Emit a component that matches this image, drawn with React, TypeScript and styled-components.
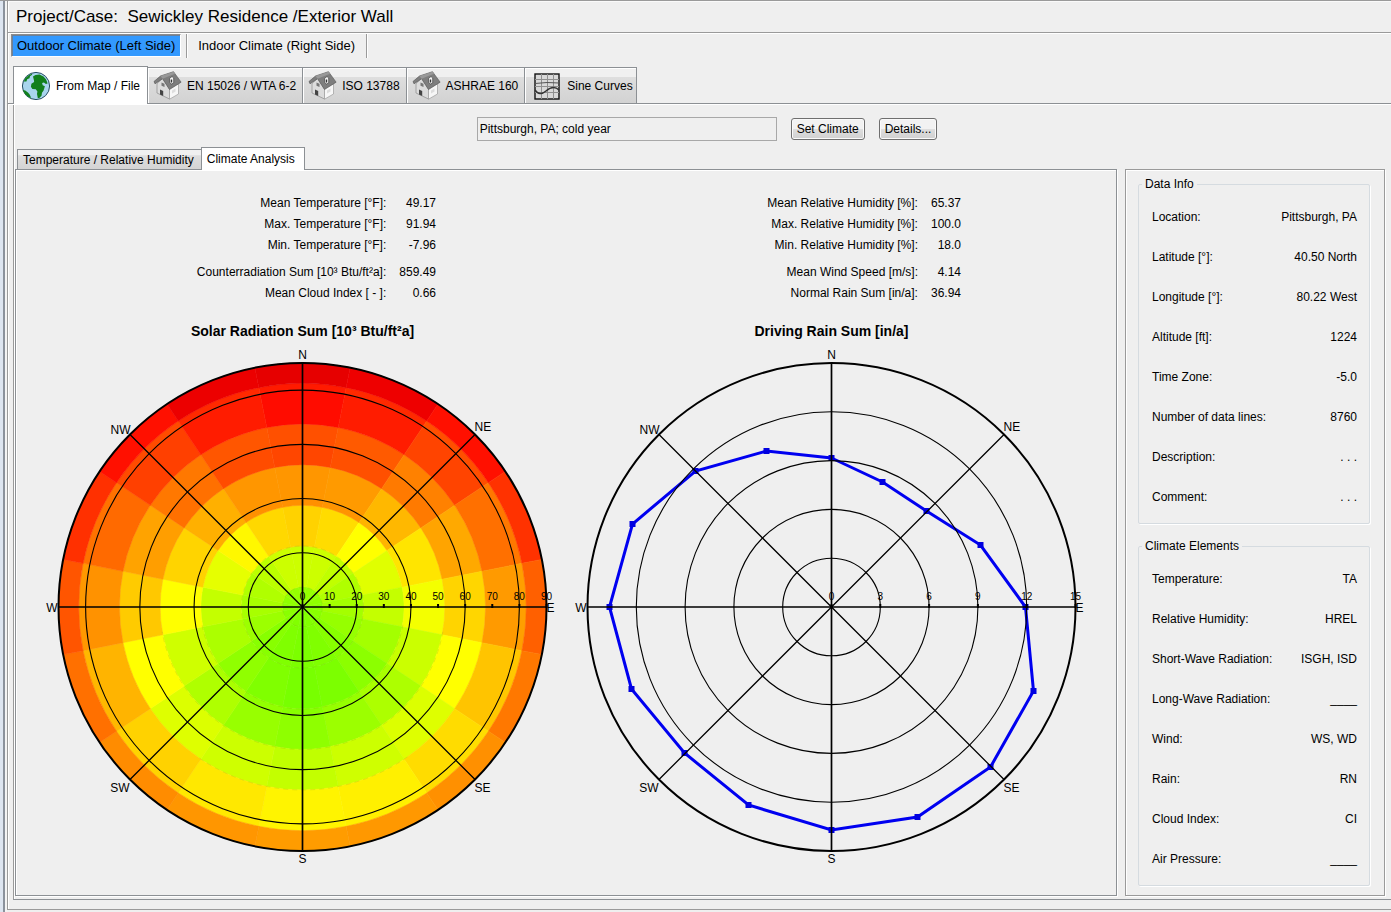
import React from "react";
import styled, { createGlobalStyle, css } from "styled-components";

const GlobalStyle = createGlobalStyle`
  * { box-sizing: border-box; }
  body {
    margin: 0;
    background: #efefef;
    color: #000;
    font-family: "Liberation Sans", Arial, sans-serif;
    font-size: 12px;
    line-height: 16px;
  }
  button, input { font: inherit; color: inherit; }
`;

const Frame = styled.div`
  display: flex;
  min-height: 100vh;
  border-top: 1px solid #9a9a9a;
`;

const Gutter = styled.div`
  flex: none;
  width: 7px;
  background: linear-gradient(to right, #dde5f0 0 3px, #8b929c 3px 5px, #f4f4f4 5px);
`;

const Main = styled.main`
  flex: 1;
  min-width: 0;
  display: flex;
  flex-direction: column;
  margin-bottom: 2px;
  border-left: 1px solid #9a9a9a;
  border-bottom: 1px solid #9a9a9a;
  box-shadow: inset 1px 0 #fff;
`;

const Header = styled.header`
  height: 32px;
  padding: 6px 8px;
  border-bottom: 1px solid #9a9a9a;
  box-shadow: 0 1px #fff, inset 0 1px #fafafa;
`;

const Title = styled.h1`
  margin: 0;
  font-size: 17px;
  line-height: 20px;
  font-weight: 400;
  white-space: pre;
`;

const SideNav = styled.nav`
  display: flex;
  padding: 1px 3px 0;
  height: 27px;
`;

const SideButton = styled.button<{ $active?: boolean }>`
  height: 23px;
  padding: 0 5px;
  font-size: 13px;
  line-height: 20px;
  background: none;
  border: 1px solid transparent;
  white-space: nowrap;
  ${(p) =>
    p.$active &&
    css`
      background: #3399fe;
      border-color: #8c8c8c #fff #fff #8c8c8c;
      box-shadow: inset 1px 1px #6a7f99;
    `}
`;

const NavDivider = styled.span`
  width: 1px;
  height: 24px;
  margin: 0 5px;
  background: #9a9a9a;
  box-shadow: 1px 0 #fff;
`;

const TabBar = styled.div`
  display: flex;
  align-items: flex-end;
  height: 44px;
  padding-left: 5px;
  border-bottom: 1px solid #8c9094;
  box-shadow: 0 1px #fff;
`;

const Tab = styled.button<{ $active?: boolean }>`
  display: flex;
  align-items: center;
  gap: 5px;
  height: 36px;
  padding: 0 6px 0 5px;
  white-space: nowrap;
  border: 1px solid #8c9094;
  border-width: 1px 1px 0 0;
  box-shadow: inset 1px 1px #fff;
  background: linear-gradient(#f0f0f0 0 25%, #dedede 26%, #d2d2d2);
  &:last-child { padding-right: 3px; }
  ${(p) =>
    p.$active &&
    css`
      height: 38px;
      margin-bottom: -1px;
      padding: 0 7px;
      border-left-width: 1px;
      background: #fff;
    `}
`;

const Content = styled.div`
  flex: 1;
  display: flex;
  flex-direction: column;
  margin: 1px 0 9px 5px;
  padding: 12px 6px 3px 1px;
  border-left: 1px solid #9a9a9a;
  border-bottom: 1px solid #8c9094;
  box-shadow: inset 1px 0 #fff;
`;

const ClimateBar = styled.div`
  display: flex;
  justify-content: center;
  align-items: center;
  gap: 14px;
  padding-left: 14px;
`;

const ClimateField = styled.input`
  width: 300px;
  height: 24px;
  padding: 0 2px;
  border: 1px solid #a8a8a8;
  background: #efefef;
`;

const PushButton = styled.button`
  height: 22px;
  padding: 0 5px;
  border: 1px solid #6f6f6f;
  border-radius: 3px;
  box-shadow: inset 0 0 0 1px #fafafa;
  background: linear-gradient(#f2f2f2 0 48%, #dedede 52%, #d0d0d0);
`;

const SubTabBar = styled.div`
  display: flex;
  align-items: flex-end;
  height: 28px;
  padding-left: 2px;
`;

const SubTab = styled.button<{ $active?: boolean }>`
  height: 20px;
  padding: 0 7px 0 5px;
  line-height: 18px;
  white-space: nowrap;
  border: 1px solid #8c9094;
  border-width: 1px 0 0 1px;
  background: linear-gradient(#f0f0f0 0 25%, #dedede 30%, #d4d4d4);
  ${(p) =>
    p.$active &&
    css`
      position: relative;
      height: 23px;
      margin-bottom: -1px;
      padding: 0 9px 0 5px;
      line-height: 22px;
      border-right-width: 1px;
      background: #fff;
    `}
`;

const Columns = styled.div`
  flex: 1;
  display: flex;
  gap: 8px;
`;

const Analysis = styled.section`
  flex: 1;
  min-width: 0;
  display: grid;
  grid-template-columns: 1fr 1fr;
  align-content: start;
  padding: 23px 20px 16px 22px;
  border: 1px solid #8c9094;
  box-shadow: inset 1px 1px #fff, 1px 1px #fff;
`;

const Chart = styled.article`
  display: flex;
  flex-direction: column;
`;

const Stats = styled.dl<{ $inset: number }>`
  display: grid;
  grid-template-columns: max-content max-content;
  justify-content: end;
  column-gap: 13px;
  margin: 0;
  padding-right: ${(p) => p.$inset}px;
  line-height: 21px;
  text-align: right;
`;

const StatLabel = styled.dt<{ $spaced?: boolean }>`
  padding-top: ${(p) => (p.$spaced ? 6 : 0)}px;
`;

const StatValue = styled.dd<{ $spaced?: boolean }>`
  margin: 0;
  padding-top: ${(p) => (p.$spaced ? 6 : 0)}px;
`;

const ChartTitle = styled.h2`
  margin: 17px 0 3px;
  font-size: 14px;
  line-height: 20px;
  text-align: center;
`;

const ChartSvg = styled.svg`
  display: block;
  width: 100%;
  height: 528px;
  font-family: inherit;
`;

const Sidebar = styled.aside`
  flex: none;
  width: 260px;
  padding: 6px 14px 6px 12px;
  border: 1px solid #9a9a9a;
  box-shadow: inset 1px 1px #fff, 1px 1px #fff;
`;

const Group = styled.fieldset`
  margin: 0;
  padding: 5px 12px 6px 13px;
  min-width: 0;
  border: 1px solid #d5dbe0;
  border-radius: 2px;
  box-shadow: 1px 1px #fff;
  & + & { margin-top: 14px; }
`;

const Legend = styled.legend`
  margin-left: -10px;
  padding: 0 3px;
`;

const Facts = styled.dl`
  margin: 0;
`;

const Fact = styled.div`
  display: flex;
  justify-content: space-between;
  line-height: 40px;
`;

const FactValue = styled.dd`
  margin: 0;
`;

const GlobeIcon = () => (
  <svg width="30" height="30" viewBox="0 0 30 30" aria-hidden="true">
    <circle cx="15" cy="15" r="13.6" fill="#a9d5ee" stroke="#274e63" strokeWidth="1" />
    <path d="M12 5.500 14.500 4l4-.6 4 2.200 2.600 3 1.500 4-1.700.4-2-1.500-1.800.4.6 2.400 2.200 1-1.300 4.100-1.600 2.300-.5 3-2.200 2.200-1.500.2-.8-4.200.4-2.500-1.600-2.200-3.400-.3-1.500-2.200.5-3 2.700-1.600-.1-1.600z" fill="#12801c" />
    <path d="M2.700 10.500 4.500 7 7.500 4.500l3-1.700.9.800-2.400 1.600-.5 2-2.300 1-.8 2.200zM1.900 19l2.400.5 2.900 2.300 1.600 2 1.400 3.200-3.200-1.200-3.200-3z" fill="#12801c" />
  </svg>
);

const HouseIcon = () => (
  <svg width="29" height="29" viewBox="0 0 29 29" aria-hidden="true">
    <path d="M4 12.500 10 7l6.500 11V28L4 22z" fill="#dcdcdc" stroke="#8b8b8b" strokeWidth=".7" />
    <path d="m16.500 17.500 9-5V23l-9 5.200z" fill="#f7f7f7" stroke="#9c9c9c" strokeWidth=".7" />
    <path d="M1 10.500 7.500 5 20.500.700l7.600 10.500L16.500 18.500 9.500 7.700 2 12.800z" fill="#7e7e7e" stroke="#5c5c5c" strokeWidth=".7" />
    <path d="M7.500 5 20.500.700l1.500 2L9.500 7.700z" fill="#999" />
    <path d="M16.500 7.500 19 5.500l1.700 1.500v5L18.500 13l-2-1.500z" fill="#f5f5f5" stroke="#444" strokeWidth=".7" />
    <path d="M17.700 8.500h1.500v3h-1.500z" fill="#333" />
    <path d="m7 18.500 3.200 1.500v5L7 23.500z" fill="#444" />
    <path d="m8.500 11.500 3 1.200v3.300l-3-1.300z" fill="#777" />
    <path d="m19 19.500 3.500-2v3l-3.500 2z" fill="#ddd" />
  </svg>
);

const SineIcon = () => (
  <svg width="32" height="28" viewBox="-3 0 32 28" aria-hidden="true">
    <rect x="2" y="2" width="24" height="25" fill="#d9d9d9" stroke="#111" strokeWidth="1.400" />
    <path d="M8.500 2v25M14.500 2v25M20.500 2v25M2 7.500h24M2 14.500h24M2 20.500h24" stroke="#909090" fill="none" />
    <path d="M2 11.500 14 10.500l12 .5" stroke="#555" fill="none" />
    <path d="M2 18c3 4.500 7 4.500 11 1s9-5 13-1" stroke="#333" strokeWidth="1.400" fill="none" />
  </svg>
);

const RADIUS = 244;
const SECTORS = 16;
const BAND_LIMITS = [0, 7.5, 22.5, 37.5, 52.5, 67.5, 82.5, 90];

// One row per tilt band, inner to outer; columns run clockwise from north.
const BAND_COLORS = [
  "96ff00 96ff00 94ff00 90ff00 8eff00 8aff00 86ff00 82ff00 80ff00 82ff00 86ff00 8aff00 8eff00 90ff00 94ff00 96ff00",
  "ccff00 ccff00 c0ff00 b0ff00 a4ff00 96ff00 88ff00 80ff00 7cff00 80ff00 88ff00 9cff00 a8ff00 b0ff00 bcff00 ccff00",
  "ffd200 ffdc00 ffff00 e0ff00 c4ff00 a4ff00 8cff00 7cff00 78ff00 80ff00 90ff00 acff00 c4ff00 e6ff00 fff800 ffd800",
  "ff9000 ff9400 ffb400 ffe400 f4ff00 c8ff00 a8ff00 96ff00 88ff00 92ff00 aaff00 ccff00 ffff00 ffd200 ffac00 ff9000",
  "ff4600 ff5000 ff7a00 ffa400 ffd400 ffff00 dcff00 ccff00 c0ff00 ccff00 dcff00 ffff00 ffc800 ff9e00 ff7000 ff4c00",
  "ff0c00 ff1c00 ff4400 ff7000 ff9a00 ffc400 ffdc00 fff000 fff400 ffe800 ffd200 ffb400 ff9200 ff6a00 ff4000 ff1c00",
  "e60000 ee0000 ff1000 ff3200 ff6000 ff7800 ff9000 ff9800 ff9c00 ff9600 ff8c00 ff7000 ff5500 ff3000 ff1000 ec0000",
].map((row) => row.split(" "));

const polar = (radius: number, degrees: number) => {
  const a = (degrees * Math.PI) / 180;
  return `${(radius * Math.sin(a)).toFixed(2)} ${(-radius * Math.cos(a)).toFixed(2)}`;
};

const cell = (band: number, sector: number) => {
  const r0 = (BAND_LIMITS[band] / 90) * RADIUS;
  const r1 = (BAND_LIMITS[band + 1] / 90) * RADIUS;
  const from = (sector - 0.5) * (360 / SECTORS);
  const to = from + 360 / SECTORS;
  return `M${polar(r0, from)}L${polar(r1, from)}A${r1} ${r1} 0 0 1 ${polar(r1, to)}L${polar(r0, to)}A${r0} ${r0} 0 0 0 ${polar(r0, from)}Z`;
};

const POINTS: [string, number, number, "start" | "middle" | "end"][] = [
  ["N", 0, -248, "middle"],
  ["NE", 172, -176, "start"],
  ["E", 244, 5, "start"],
  ["SE", 172, 185, "start"],
  ["S", 0, 256, "middle"],
  ["SW", -173, 185, "end"],
  ["W", -245, 5, "end"],
  ["NW", -172, -173, "end"],
];

const CompassGrid = ({ rings, ticks }: { rings: number[]; ticks: number[] }) => {
  const max = ticks[ticks.length - 1];
  const d = RADIUS * Math.SQRT1_2;
  return (
    <>
      <g fill="none" stroke="#000">
        {rings.map((r) => (
          <circle key={r} r={(r / max) * RADIUS} strokeWidth="1.100" />
        ))}
        <circle r={RADIUS} strokeWidth="2" />
        <path d={`M${-d} ${-d}L${d} ${d}M${-d} ${d}L${d} ${-d}`} strokeWidth="1.300" />
        <path d={`M0 ${-RADIUS}V${RADIUS}M${-RADIUS} 0H${RADIUS}`} strokeWidth="1.700" />
      </g>
      {ticks.map((t) => (
        <g key={t}>
          <rect x={(t / max) * RADIUS - 1} y="-3" width="2" height="4" />
          <text x={(t / max) * RADIUS} y="-7" fontSize="10" textAnchor="middle">
            {t}
          </text>
        </g>
      ))}
      {POINTS.map(([name, x, y, anchor]) => (
        <text key={name} x={x} y={y} fontSize="12" textAnchor={anchor}>
          {name}
        </text>
      ))}
    </>
  );
};

const SolarChart = () => (
  <ChartSvg viewBox="-264 -263 528 528" role="img" aria-label="Solar radiation by orientation and tilt">
    {BAND_COLORS.map((row, band) =>
      row.map((color, sector) => (
        <path
          key={`${band}-${sector}`}
          d={cell(band, sector)}
          fill={`#${color}`}
          stroke={`#${color}`}
          strokeWidth=".5"
        />
      ))
    )}
    <g fill="none" stroke="#ffff00" strokeOpacity=".06">
      <circle r="220" strokeWidth="7" />
      <circle r="173" strokeWidth="20" />
      <circle r="125" strokeWidth="34" />
    </g>
    <g fill="none" stroke="#70a000" strokeOpacity=".3" strokeWidth=".6" strokeDasharray="5 4">
      <circle r="20" />
      <circle r="61" />
      <path d={`M${polar(102, 100)}A102 102 0 0 1 ${polar(102, 260)}`} />
      <path d={`M${polar(142.5, 100)}A142.5 142.5 0 0 1 ${polar(142.5, 260)}`} />
      <path d={`M${polar(183, 145)}A183 183 0 0 1 ${polar(183, 215)}`} />
    </g>
    <CompassGrid rings={[20, 40, 60, 80]} ticks={[0, 10, 20, 30, 40, 50, 60, 70, 80, 90]} />
  </ChartSvg>
);

const RAIN: [number, number][] = [
  [0, -149], [51, -125], [95, -96], [149, -62],
  [194, 0], [202, 84], [159, 160], [86, 210],
  [0, 223], [-83, 198], [-147, 146], [-200, 82],
  [-222, 0], [-199, -83], [-136, -136], [-65, -156],
];

const RainChart = () => (
  <ChartSvg viewBox="-264 -263 528 528" role="img" aria-label="Driving rain by orientation">
    <polygon points={RAIN.map((p) => p.join(",")).join(" ")} fill="none" stroke="#0000f0" strokeWidth="3" />
    {RAIN.map(([x, y]) => (
      <rect key={`${x},${y}`} x={x - 3} y={y - 3} width="6" height="6" fill="#0000e0" />
    ))}
    <CompassGrid rings={[3, 6, 9, 12]} ticks={[0, 3, 6, 9, 12, 15]} />
  </ChartSvg>
);

type Row = [string, string, boolean?];

const SOLAR_STATS: Row[] = [
  ["Mean Temperature [°F]:", "49.17"],
  ["Max. Temperature [°F]:", "91.94"],
  ["Min. Temperature [°F]:", "-7.96"],
  ["Counterradiation Sum [10³ Btu/ft²a]:", "859.49", true],
  ["Mean Cloud Index [ - ]:", "0.66"],
];

const RAIN_STATS: Row[] = [
  ["Mean Relative Humidity [%]:", "65.37"],
  ["Max. Relative Humidity [%]:", "100.0"],
  ["Min. Relative Humidity [%]:", "18.0"],
  ["Mean Wind Speed [m/s]:", "4.14", true],
  ["Normal Rain Sum [in/a]:", "36.94"],
];

const StatList = ({ rows, inset }: { rows: Row[]; inset: number }) => (
  <Stats $inset={inset}>
    {rows.map(([label, value, spaced]) => (
      <React.Fragment key={label}>
        <StatLabel $spaced={spaced}>{label}</StatLabel>
        <StatValue $spaced={spaced}>{value}</StatValue>
      </React.Fragment>
    ))}
  </Stats>
);

const DATA_INFO: Row[] = [
  ["Location:", "Pittsburgh, PA"],
  ["Latitude [°]:", "40.50 North"],
  ["Longitude [°]:", "80.22 West"],
  ["Altitude [ft]:", "1224"],
  ["Time Zone:", "-5.0"],
  ["Number of data lines:", "8760"],
  ["Description:", ". . ."],
  ["Comment:", ". . ."],
];

const CLIMATE_ELEMENTS: Row[] = [
  ["Temperature:", "TA"],
  ["Relative Humidity:", "HREL"],
  ["Short-Wave Radiation:", "ISGH, ISD"],
  ["Long-Wave Radiation:", "____"],
  ["Wind:", "WS, WD"],
  ["Rain:", "RN"],
  ["Cloud Index:", "CI"],
  ["Air Pressure:", "____"],
];

const FactGroup = ({ title, rows }: { title: string; rows: Row[] }) => (
  <Group>
    <Legend>{title}</Legend>
    <Facts>
      {rows.map(([label, value]) => (
        <Fact key={label}>
          <dt>{label}</dt>
          <FactValue>{value}</FactValue>
        </Fact>
      ))}
    </Facts>
  </Group>
);

export default function App() {
  return (
    <>
      <GlobalStyle />
      <Frame>
        <Gutter />
        <Main>
          <Header>
            <Title>{"Project/Case:  Sewickley Residence /Exterior Wall"}</Title>
          </Header>
          <SideNav>
            <SideButton $active aria-pressed="true">Outdoor Climate (Left Side)</SideButton>
            <NavDivider />
            <SideButton>Indoor Climate (Right Side)</SideButton>
            <NavDivider />
          </SideNav>
          <TabBar role="tablist">
            <Tab $active role="tab" aria-selected="true"><GlobeIcon />From Map / File</Tab>
            <Tab role="tab"><HouseIcon />EN 15026 / WTA 6-2</Tab>
            <Tab role="tab"><HouseIcon />ISO 13788</Tab>
            <Tab role="tab"><HouseIcon />ASHRAE 160</Tab>
            <Tab role="tab"><SineIcon />Sine Curves</Tab>
          </TabBar>
          <Content>
            <ClimateBar>
              <ClimateField aria-label="Climate file" readOnly value="Pittsburgh, PA; cold year" />
              <PushButton>Set Climate</PushButton>
              <PushButton>Details...</PushButton>
            </ClimateBar>
            <SubTabBar role="tablist">
              <SubTab role="tab">Temperature / Relative Humidity</SubTab>
              <SubTab $active role="tab" aria-selected="true">Climate Analysis</SubTab>
            </SubTabBar>
            <Columns>
              <Analysis>
                <Chart>
                  <StatList rows={SOLAR_STATS} inset={131} />
                  <ChartTitle>Solar Radiation Sum [10³ Btu/ft²a]</ChartTitle>
                  <SolarChart />
                </Chart>
                <Chart>
                  <StatList rows={RAIN_STATS} inset={135} />
                  <ChartTitle>Driving Rain Sum [in/a]</ChartTitle>
                  <RainChart />
                </Chart>
              </Analysis>
              <Sidebar>
                <FactGroup title="Data Info" rows={DATA_INFO} />
                <FactGroup title="Climate Elements" rows={CLIMATE_ELEMENTS} />
              </Sidebar>
            </Columns>
          </Content>
        </Main>
      </Frame>
    </>
  );
}
